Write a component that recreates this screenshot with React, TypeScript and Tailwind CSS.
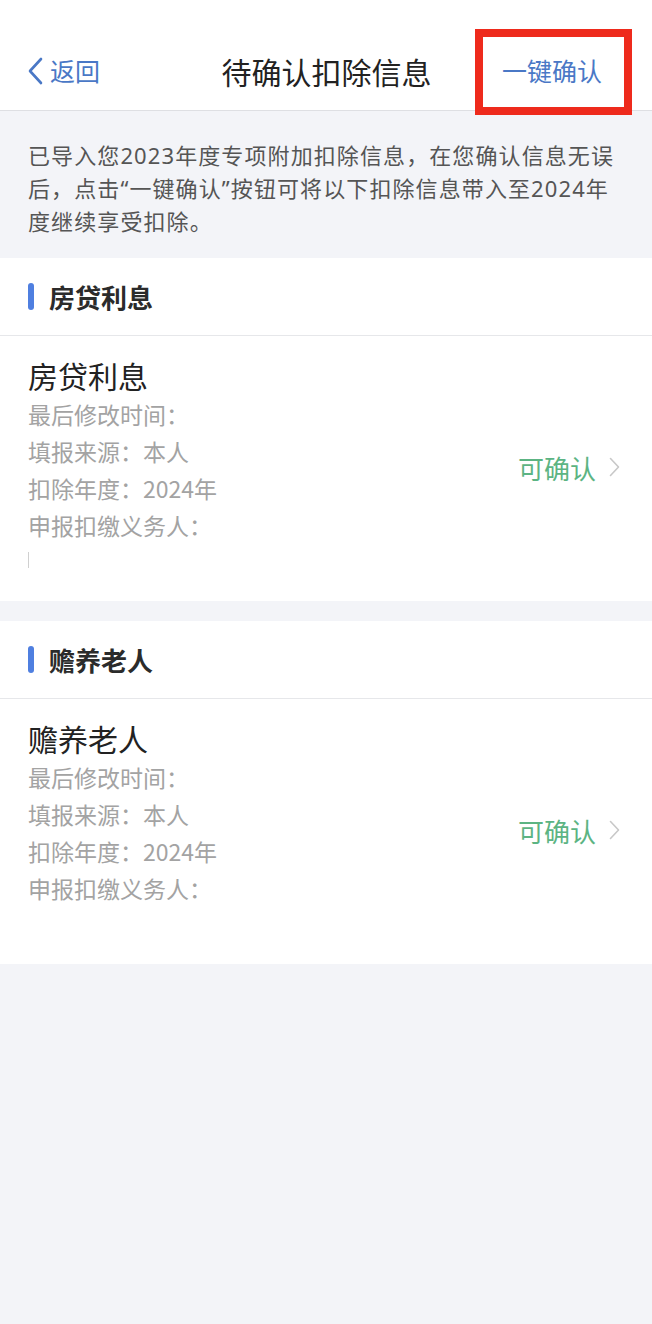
const font = { fontFamily: '"Noto Sans CJK SC", "Noto Sans", sans-serif' };
const mixed = { fontFamily: '"Noto Sans", "Noto Sans CJK SC", sans-serif' };

type Item = { section: string; showMark?: boolean };

const items: Item[] = [
  { section: '房贷利息', showMark: true },
  { section: '赡养老人' },
];

const details = ['最后修改时间：', '填报来源：本人', '扣除年度：2024年', '申报扣缴义务人：'];

const BackIcon = () => (
  <svg width="16" height="28" viewBox="0 0 16 28" fill="none">
    <path d="M14 2 L3 14 L14 26" stroke="#4a78c6" strokeWidth="2.6" strokeLinecap="round" strokeLinejoin="round" />
  </svg>
);

const ChevronIcon = () => (
  <svg width="11" height="20" viewBox="0 0 11 20" fill="none">
    <path d="M1.5 1.5 L9.5 10 L1.5 18.5" stroke="#c8c8c8" strokeWidth="1.6" strokeLinecap="round" strokeLinejoin="round" />
  </svg>
);

const Section = ({ item }: { item: Item }) => (
  <div className="bg-white">
    <div className="flex h-[78px] items-center border-b border-[#e6e7ea] pl-[28px]">
      <div className="h-[27px] w-[6px] rounded-full bg-[#4f7fe0]" />
      <div className="ml-[15px] text-[26px] font-bold text-[#2b2b2b]">{item.section}</div>
    </div>
    <div className="flex h-[265px] items-center pl-[28px] pr-[32px]">
      <div className="flex flex-1 flex-col self-start pt-[18px]">
        <div className="text-[30px] leading-[42px] text-[#222]">{item.section}</div>
        {details.map((d) => (
          <div key={d} className="text-[23px] leading-[37px] text-[#a3a3a3]">
            {d}
          </div>
        ))}
        {item.showMark && <div className="mt-[8px] h-[16px] w-px bg-[#d0d0d0]" />}
      </div>
      <div className="flex items-center gap-[13px] pb-[3px]">
        <span className="text-[26px] text-[#5cb483]">可确认</span>
        <ChevronIcon />
      </div>
    </div>
  </div>
);

export default function App() {
  return (
    <div className="min-h-[1324px] w-[652px] bg-[#f3f4f8]" style={font}>
      <div className="relative h-[111px] border-b border-[#dedfe3] bg-white">
        <div className="flex h-full items-end pb-[7px]">
          <div className="flex h-[64px] w-full items-center pl-[27px] pr-[50px]">
            <div className="flex w-[162px] items-center gap-[7px]">
              <BackIcon />
              <span className="text-[25px] text-[#4a78c6]">返回</span>
            </div>
            <div className="flex-1 text-center text-[30px] text-[#222]">待确认扣除信息</div>
            <div className="flex w-[138px] justify-end">
              <span className="text-[25px] text-[#4a78c6]">一键确认</span>
            </div>
          </div>
        </div>
        <div className="absolute left-[475px] top-[29px] z-10 h-[86px] w-[157px] border-[8px] border-[#ee2a1c]" />
      </div>

      <div
        className="px-[28px] pb-[20px] pt-[28px] text-[22px] leading-[33px] tracking-[1.1px] text-[#555]"
        style={mixed}
      >
        已导入您2023年度专项附加扣除信息，在您确认信息无误后，点击“一键确认”按钮可将以下扣除信息带入至2024年度继续享受扣除。
      </div>

      <div className="flex flex-col gap-[20px]">
        {items.map((it) => (
          <Section key={it.section} item={it} />
        ))}
      </div>
    </div>
  );
}
